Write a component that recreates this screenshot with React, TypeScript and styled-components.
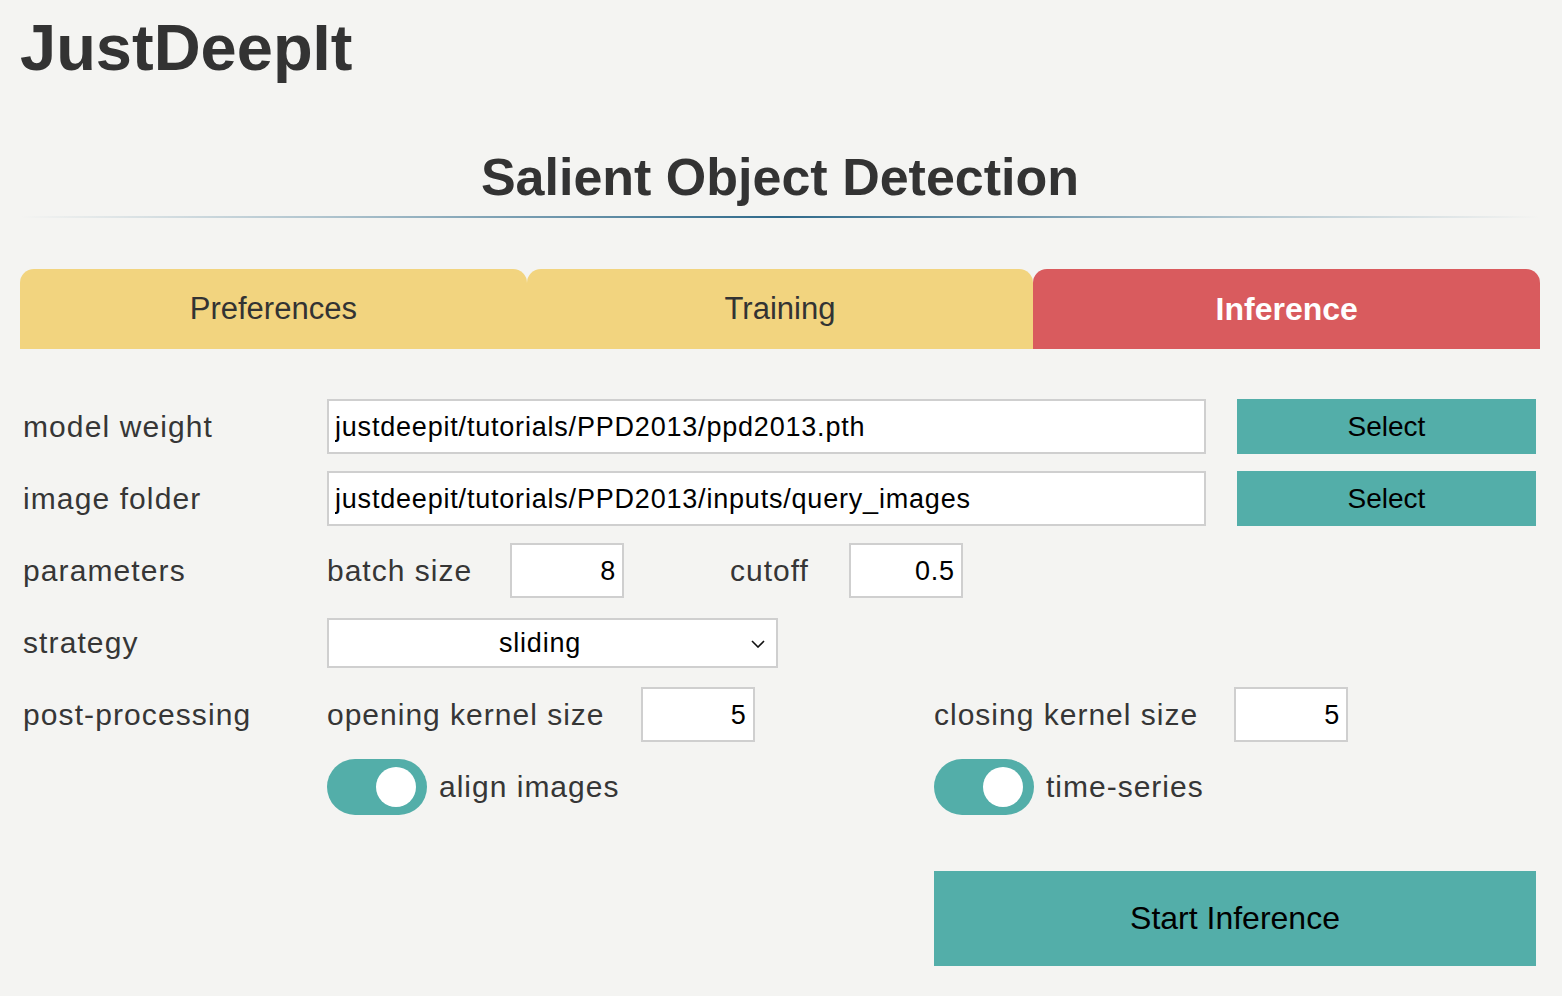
import styled, { createGlobalStyle } from "styled-components";

const GlobalStyle = createGlobalStyle`
  body {
    margin: 0;
    background: #f4f4f2;
    font-family: "Liberation Sans", Arial, sans-serif;
    color: #363636;
  }
`;

const TEAL = "#53aea9";

export default function App() {
  return (
    <>
      <GlobalStyle />
      <Page>
        <Title>JustDeepIt</Title>
        <Heading>Salient Object Detection</Heading>
        <Divider />

        <Tabs>
          <Tab>Preferences</Tab>
          <Tab>Training</Tab>
          <Tab $active>Inference</Tab>
        </Tabs>

        <Form>
          <Label>model weight</Label>
          <PathRow>
            <TextInput defaultValue="justdeepit/tutorials/PPD2013/ppd2013.pth" />
            <SelectButton>Select</SelectButton>
          </PathRow>

          <Label>image folder</Label>
          <PathRow>
            <TextInput defaultValue="justdeepit/tutorials/PPD2013/inputs/query_images" />
            <SelectButton>Select</SelectButton>
          </PathRow>

          <Label>parameters</Label>
          <ParamRow>
            <ParamGroup $gap={38}>
              <SubLabel>batch size</SubLabel>
              <NumberInput defaultValue="8" />
            </ParamGroup>
            <ParamGroup $gap={40}>
              <SubLabel>cutoff</SubLabel>
              <NumberInput defaultValue="0.5" />
            </ParamGroup>
          </ParamRow>

          <Label>strategy</Label>
          <div>
            <FakeSelect>
              <SelectValue>sliding</SelectValue>
              <Chevron viewBox="0 0 14 8">
                <path d="M1 1 L7 7 L13 1" />
              </Chevron>
            </FakeSelect>
          </div>

          <Label>post-processing</Label>
          <Halves>
            <ParamGroup>
              <SubLabel>opening kernel size</SubLabel>
              <NumberInput defaultValue="5" />
            </ParamGroup>
            <ParamGroup>
              <SubLabel>closing kernel size</SubLabel>
              <NumberInput defaultValue="5" />
            </ParamGroup>
          </Halves>

          <span />
          <Halves>
            <SwitchItem>
              <Track>
                <Thumb />
              </Track>
              <SubLabel>align images</SubLabel>
            </SwitchItem>
            <SwitchItem>
              <Track>
                <Thumb />
              </Track>
              <SubLabel>time-series</SubLabel>
            </SwitchItem>
          </Halves>

          <span />
          <StartRow>
            <span />
            <StartButton>Start Inference</StartButton>
          </StartRow>
        </Form>
      </Page>
    </>
  );
}

const Page = styled.div`
  padding: 0 22px 40px 20px;
`;

const Title = styled.h1`
  margin: 15px 0 0;
  font-size: 65px;
  line-height: 65px;
  font-weight: 700;
  color: #333;
`;

const Heading = styled.h2`
  margin: 71px 0 0;
  text-align: center;
  font-size: 52px;
  line-height: 52px;
  font-weight: 700;
  color: #333;
`;

const Divider = styled.div`
  margin-top: 13px;
  height: 2px;
  background: linear-gradient(
    90deg,
    rgba(47, 106, 139, 0) 0%,
    rgba(47, 106, 139, 0.35) 20%,
    #2f6a8b 50%,
    rgba(47, 106, 139, 0.35) 80%,
    rgba(47, 106, 139, 0) 100%
  );
`;

const Tabs = styled.div`
  margin-top: 51px;
  display: flex;
  height: 80px;
`;

const Tab = styled.div<{ $active?: boolean }>`
  flex: 1;
  display: flex;
  align-items: center;
  justify-content: center;
  border-radius: 14px 14px 0 0;
  background: ${(p) => (p.$active ? "#d95b5e" : "#f2d47f")};
  color: ${(p) => (p.$active ? "#fff" : "#333")};
  font-size: ${(p) => (p.$active ? "32px" : "31px")};
  font-weight: ${(p) => (p.$active ? 700 : 400)};
`;

const Form = styled.div`
  margin-top: 50px;
  margin-right: 4px;
  display: grid;
  grid-template-columns: 307px 1fr;
  grid-auto-rows: minmax(55px, auto);
  row-gap: 17px;
  align-items: center;
`;

const Label = styled.div`
  padding-left: 3px;
  font-size: 30px;
  letter-spacing: 1.1px;
  color: #363636;
`;

const SubLabel = styled.span`
  font-size: 30px;
  letter-spacing: 1px;
  color: #363636;
  white-space: nowrap;
`;

const PathRow = styled.div`
  display: grid;
  grid-template-columns: 1fr 299px;
  column-gap: 31px;
`;

const Field = styled.input`
  box-sizing: border-box;
  height: 55px;
  border: 2px solid #cfcfcf;
  border-radius: 0;
  background: #fff;
  color: #000;
  font-family: "Liberation Sans", Arial, sans-serif;
  font-size: 27px;
  letter-spacing: 0.8px;
  padding-top: 3px;
  outline: none;
`;

const TextInput = styled(Field)`
  width: 100%;
  padding-left: 6px;
  padding-right: 6px;
`;

const NumberInput = styled(Field)`
  width: 114px;
  padding-left: 6px;
  padding-right: 6px;
  text-align: right;
`;

const SelectButton = styled.button`
  height: 55px;
  border: none;
  background: ${TEAL};
  color: #000;
  font-family: "Liberation Sans", Arial, sans-serif;
  font-size: 28px;
`;

const ParamRow = styled.div`
  display: flex;
  align-items: center;
  gap: 106px;
`;

const ParamGroup = styled.div<{ $gap?: number }>`
  display: flex;
  align-items: center;
  gap: ${(p) => p.$gap ?? 36}px;
`;

const Halves = styled.div`
  display: grid;
  grid-template-columns: 607px 1fr;
  align-items: center;
`;

const FakeSelect = styled.div`
  box-sizing: border-box;
  width: 451px;
  height: 50px;
  display: flex;
  align-items: center;
  border: 2px solid #cfcfcf;
  background: #fff;
  color: #000;
  font-size: 27px;
  letter-spacing: 0.8px;
  padding-top: 2px;
`;

const SelectValue = styled.span`
  flex: 1;
  text-align: center;
`;

const Chevron = styled.svg`
  width: 14px;
  height: 8px;
  margin-right: 11px;
  fill: none;
  stroke: #111;
  stroke-width: 1.6;
`;

const SwitchItem = styled.div`
  display: flex;
  align-items: center;
  gap: 12px;
`;

const Track = styled.span`
  box-sizing: border-box;
  width: 100px;
  height: 56px;
  border-radius: 28px;
  background: ${TEAL};
  display: flex;
  align-items: center;
  justify-content: flex-end;
  padding-right: 11px;
`;

const Thumb = styled.span`
  width: 40px;
  height: 40px;
  border-radius: 50%;
  background: #fff;
`;

const StartRow = styled.div`
  margin-top: 39px;
  display: grid;
  grid-template-columns: 607px 1fr;
`;

const StartButton = styled.button`
  height: 95px;
  border: none;
  background: ${TEAL};
  color: #000;
  font-family: "Liberation Sans", Arial, sans-serif;
  font-size: 32px;
`;
